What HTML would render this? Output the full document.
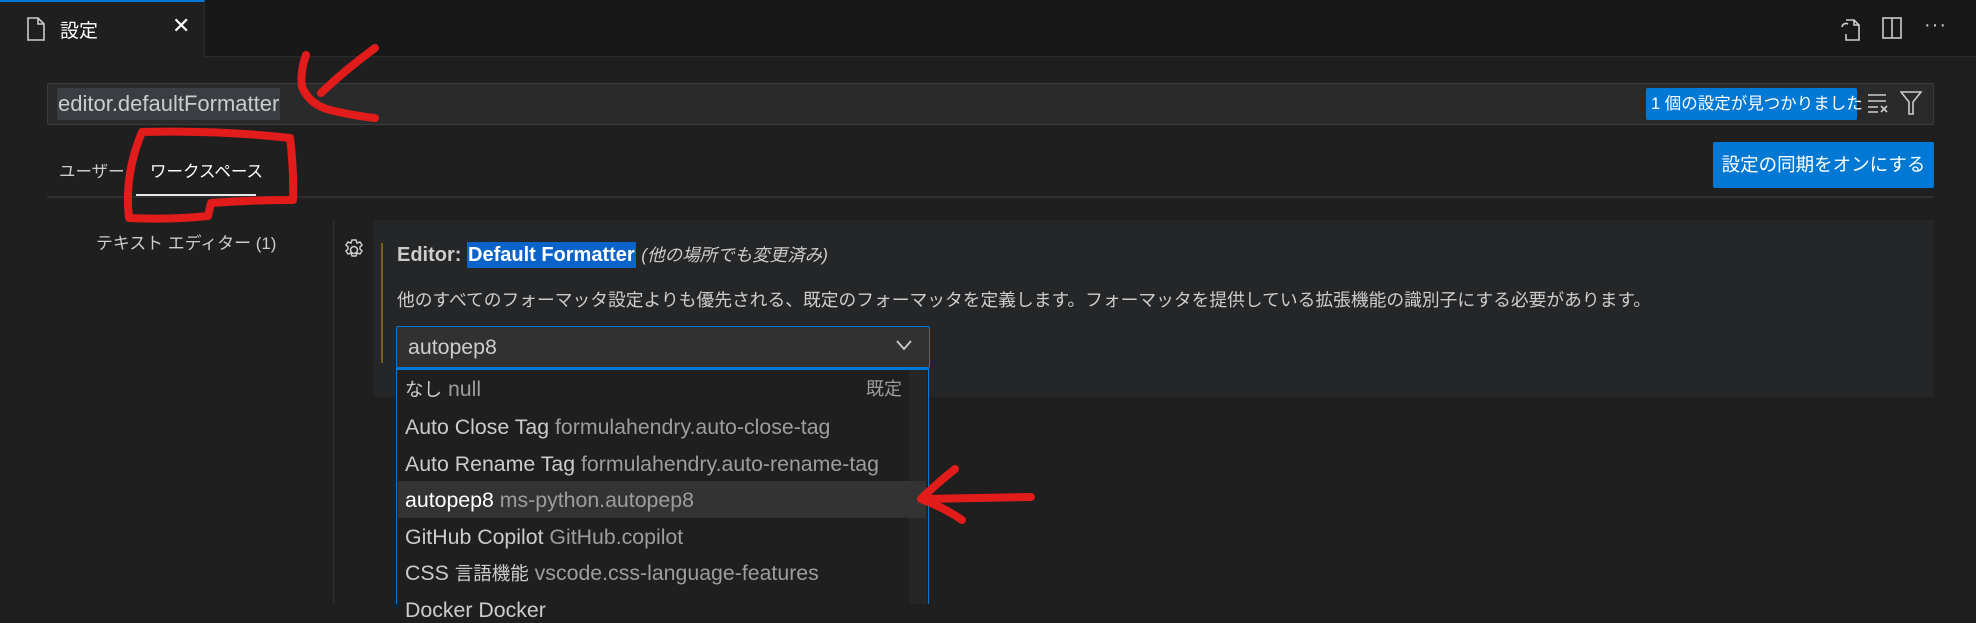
<!DOCTYPE html>
<html><head><meta charset="utf-8"><style>
*{margin:0;padding:0;box-sizing:border-box}
body{width:1976px;height:604px;background:#1f1f1f;font-family:"Liberation Sans","Noto Sans CJK JP",sans-serif;color:#ccc;position:relative;overflow:hidden;font-size:19px}
.a{position:absolute;white-space:nowrap}
.r{height:26px;line-height:26px;font-size:21.3px}
.j{font-size:18.5px}
</style></head><body>
<div class="a" style="left:0;top:0;width:1976px;height:57px;background:#181818;border-bottom:1px solid #2b2b2b"></div>
<div class="a" style="left:0;top:0;width:205px;height:58px;background:#1f1f1f;border-top:2px solid #0078d4;border-right:1px solid #2b2b2b"></div>
<svg class="a" style="left:26px;top:17px" width="20" height="24" viewBox="0 0 20 24"><path d="M2 1h10l6 6v16H2z M12 1v6h6" fill="none" stroke="#ccc" stroke-width="1.6"/></svg>
<div class="a" style="left:60px;top:16px;color:#fff;font-size:19px">設定</div>
<div class="a" style="left:172px;top:13px;color:#fff;font-size:22px">✕</div>
<svg class="a" style="left:1838px;top:16px" width="24" height="26" viewBox="0 0 24 26"><path d="M8 4h8l5 5v15H8v-6 M16 4v5h5 M4 11a4 4 0 0 1 6-3" fill="none" stroke="#ccc" stroke-width="1.6"/></svg>
<svg class="a" style="left:1881px;top:16px" width="22" height="24" viewBox="0 0 22 24"><rect x="2" y="2" width="18" height="20" fill="none" stroke="#ccc" stroke-width="1.6"/><path d="M11 2v20" stroke="#ccc" stroke-width="1.6"/></svg>
<div class="a" style="left:1924px;top:14px;color:#ccc;font-size:20px;letter-spacing:1px">···</div>

<div class="a" style="left:47px;top:83px;width:1887px;height:42px;background:#2a2a2a;border:1px solid #3c3c3c;border-radius:2px"></div>
<div class="a" style="left:57px;top:88px;height:32px;width:223px;background:#3a3d41"></div>
<div class="a r" style="left:58px;top:91px;color:#ccc;font-size:22px">editor.defaultFormatter</div>
<div class="a" style="left:1646px;top:88px;width:211px;height:32px;background:#0078d4;border-radius:2px;color:#fff;font-size:16.5px;line-height:32px;padding-left:5px">1 個の設定が見つかりました</div>
<svg class="a" style="left:1867px;top:92px" width="24" height="22" viewBox="0 0 24 22"><path d="M1 3h18M1 9h18M1 15h10M1 20h10M14 14l6 6M20 14l-6 6" stroke="#ccc" stroke-width="1.6" fill="none"/></svg>
<svg class="a" style="left:1900px;top:90px" width="22" height="26" viewBox="0 0 22 26"><path d="M1 2h20l-8 10v12h-4V12z" stroke="#ccc" stroke-width="1.6" fill="none"/></svg>

<div class="a" style="left:59px;top:158px;color:#ccc;font-size:16.5px">ユーザー</div>
<div class="a" style="left:150px;top:158px;color:#fff;font-size:16.5px">ワークスペース</div>
<div class="a" style="left:47px;top:196px;width:1887px;height:2px;background:#2f2f2f"></div>
<div class="a" style="left:136px;top:194px;width:120px;height:2px;background:#e7e7e7"></div>
<div class="a" style="left:1713px;top:142px;width:221px;height:46px;background:#0078d4;border-radius:2px;color:#fff;font-size:18.5px;line-height:46px;text-align:center">設定の同期をオンにする</div>

<div class="a" style="left:96px;top:229px;color:#ccc;font-size:16.9px">テキスト エディター (1)</div>
<div class="a" style="left:333px;top:220px;width:1px;height:384px;background:#2f2f2f"></div>
<div class="a" style="left:373px;top:220px;width:1561px;height:177px;background:#252628"></div>
<svg class="a" style="left:342px;top:238px" width="24" height="24" viewBox="0 0 24 24"><circle cx="12" cy="12" r="3.5" fill="none" stroke="#ccc" stroke-width="1.6"/><path d="M10 2h4l1 3 3-1 2 3-2 2 0 2 2 2-2 3-3-1-1 3h-4l-1-3-3 1-2-3 2-2v-2l-2-2 2-3 3 1z" fill="none" stroke="#ccc" stroke-width="1.5"/></svg>
<div class="a" style="left:381px;top:243px;width:2px;height:120px;background:#7a5c1f"></div>
<div class="a r" style="left:397px;top:242px;color:#ccc;font-weight:bold;font-size:20px">Editor: <span style="background:#0a63c9;color:#fff;padding:2px 1px">Default Formatter</span> <span style="font-weight:normal;font-style:italic;font-size:17.5px;color:#ccc">(他の場所でも変更済み)</span></div>
<div class="a" style="left:397px;top:286px;font-size:17.75px;color:#ccc">他のすべてのフォーマッタ設定よりも優先される、既定のフォーマッタを定義します。フォーマッタを提供している拡張機能の識別子にする必要があります。</div>
<div class="a" style="left:396px;top:326px;width:534px;height:42px;background:#313131;border:1px solid #0078d4;border-radius:2px"></div>
<div class="a r" style="left:408px;top:334px;color:#ccc">autopep8</div>
<svg class="a" style="left:895px;top:338px" width="18" height="14" viewBox="0 0 18 14"><path d="M2 3l7 8 7-8" stroke="#ccc" stroke-width="1.8" fill="none"/></svg>
<div class="a" style="left:396px;top:368px;width:533px;height:236px;background:#1f1f1f;border-left:1px solid #0078d4;border-right:1px solid #0078d4;border-top:2px solid #0078d4"></div>
<div class="a" style="left:909px;top:370px;width:18px;height:234px;background:#262626"></div>
<div class="a" style="left:398px;top:481px;width:528px;height:37px;background:#333"></div>
<div class="a r" style="left:405px;top:376px;color:#ccc"><span class="j">なし</span> <span style="color:#9d9d9d">null</span></div>
<div class="a r" style="left:866px;top:376px;color:#9d9d9d;font-size:18px">既定</div>
<div class="a r" style="left:405px;top:414px;color:#ccc">Auto Close Tag <span style="color:#9d9d9d">formulahendry.auto-close-tag</span></div>
<div class="a r" style="left:405px;top:451px;color:#ccc">Auto Rename Tag <span style="color:#9d9d9d">formulahendry.auto-rename-tag</span></div>
<div class="a r" style="left:405px;top:487px;color:#fff">autopep8 <span style="color:#9d9d9d">ms-python.autopep8</span></div>
<div class="a r" style="left:405px;top:524px;color:#ccc">GitHub Copilot <span style="color:#9d9d9d">GitHub.copilot</span></div>
<div class="a r" style="left:405px;top:560px;color:#ccc">CSS <span class="j">言語機能</span> <span style="color:#9d9d9d">vscode.css-language-features</span></div>
<div class="a r" style="left:405px;top:597px;color:#ccc">Docker Docker</div>

<svg class="a" style="left:0;top:0" width="1976" height="604" viewBox="0 0 1976 604"><g fill="none" stroke="#e21b1b" stroke-width="8" stroke-linecap="round" stroke-linejoin="round">
<path d="M375 48 Q345 70 321 93"/>
<path d="M306 55 Q300 72 302 87 Q310 105 330 110 Q355 116 375 118"/>
<path d="M142 132 Q220 130 290 138 Q294 170 293 200 Q250 200 211 203 L208 216 Q170 220 129 218 Q124 175 142 132"/>
<path d="M1031 497 L924 499"/>
<path d="M955 469 Q935 485 921 499 Q945 508 962 520"/>
</g></svg>
</body></html>
